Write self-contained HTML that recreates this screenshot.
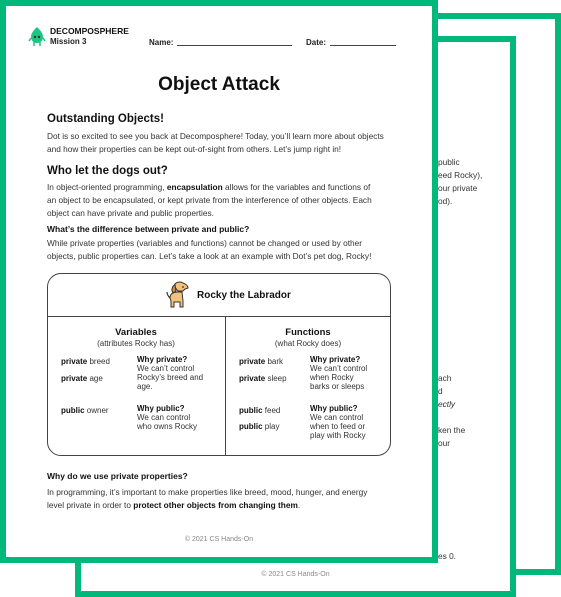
<!DOCTYPE html>
<html><head><meta charset="utf-8"><style>
*{margin:0;padding:0;box-sizing:border-box}
body{width:561px;height:597px;position:relative;overflow:hidden;background:#fff;font-family:"Liberation Sans",sans-serif;color:#222}
.pg{position:absolute;background:#fff;border:6px solid #00b87a}
.a{position:absolute;white-space:nowrap}
.t{font-size:8.3px;line-height:13px;color:#333}
b{color:#111}
</style></head><body>
<div class="pg" style="left:438px;top:13px;width:123px;height:562px;border-left:none"></div>
<div class="pg" style="left:75px;top:36px;width:441px;height:561px"></div>
<div class="a t" style="left:438px;top:156px">public</div>
<div class="a t" style="left:438px;top:169px">eed Rocky),</div>
<div class="a t" style="left:438px;top:182px">our private</div>
<div class="a t" style="left:438px;top:195px">od).</div>
<div class="a t" style="left:438px;top:372px">ach</div>
<div class="a t" style="left:438px;top:385px">d</div>
<div class="a t" style="left:438px;top:398px"><i>ectly</i></div>
<div class="a t" style="left:438px;top:424px">ken the</div>
<div class="a t" style="left:438px;top:437px">our</div>
<div class="a t" style="left:438px;top:550px">es 0.</div>
<div class="a" style="left:75px;width:441px;top:571px;text-align:center;font-size:7px;color:#888">© 2021 CS Hands-On</div>

<div class="pg" style="left:0;top:0;width:438px;height:563px"></div>
<svg class="a" style="left:28px;top:26px" width="18" height="22" viewBox="0 0 18 22"><path d="M9 1C6 4 3 7 3 11c0 4 3 6 6 6s6-2 6-6C15 7 12 4 9 1z" fill="#1ec47f"/><path d="M6 16v4M12 16v4M3 12l-2 3M15 12l2 3" stroke="#1ec47f" stroke-width="1.5"/><circle cx="7" cy="11" r="1.2" fill="#333"/><circle cx="11" cy="11" r="1.2" fill="#333"/></svg>
<div class="a" style="left:50px;top:26px;font-size:8.5px;font-weight:bold;color:#111">DECOMPOSPHERE</div>
<div class="a" style="left:50px;top:37px;font-size:8px;font-weight:bold;color:#222">Mission 3</div>
<div class="a" style="left:149px;top:38px;font-size:8px;font-weight:bold">Name:</div>
<div class="a" style="left:177px;top:45px;width:115px;border-top:1px solid #444"></div>
<div class="a" style="left:306px;top:38px;font-size:8px;font-weight:bold">Date:</div>
<div class="a" style="left:330px;top:45px;width:66px;border-top:1px solid #444"></div>
<div class="a" style="left:6px;width:426px;top:74px;text-align:center;font-size:19px;font-weight:bold;color:#111">Object Attack</div>

<div class="a" style="left:47px;top:113px;font-size:11.5px;font-weight:bold;color:#111">Outstanding Objects!</div>
<div class="a t" style="left:47px;top:130px">Dot is so excited to see you back at Decomposphere! Today, you’ll learn more about objects<br>and how their properties can be kept out-of-sight from others. Let’s jump right in!</div>
<div class="a" style="left:47px;top:165px;font-size:11.5px;font-weight:bold;color:#111">Who let the dogs out?</div>
<div class="a t" style="left:47px;top:181px">In object-oriented programming, <b>encapsulation</b> allows for the variables and functions of<br>an object to be encapsulated, or kept private from the interference of other objects. Each<br>object can have private and public properties.</div>
<div class="a" style="left:47px;top:224px;font-size:8.5px;font-weight:bold;color:#111">What’s the difference between private and public?</div>
<div class="a t" style="left:47px;top:237px">While private properties (variables and functions) cannot be changed or used by other<br>objects, public properties can. Let’s take a look at an example with Dot’s pet dog, Rocky!</div>

<div class="a" style="left:47px;top:273px;width:344px;height:183px;border:1px solid #444;border-radius:14px"></div>
<div class="a" style="left:47px;top:316px;width:344px;border-top:1px solid #444"></div>
<div class="a" style="left:225px;top:316px;height:140px;border-left:1px solid #444"></div>
<svg class="a" style="left:160px;top:278px" width="32" height="32" viewBox="0 0 32 32"><path d="M10 20c0-4 3-6 8-6h4l1 9v6h-3v-5h-6v5h-3v-6z" fill="#f1c27d" stroke="#333" stroke-width="1"/><path d="M14 8c1-4 6-5 9-3 3 1 5 3 5 5l-3 1-2 2h-5z" fill="#f1c27d" stroke="#333" stroke-width="1"/><path d="M15 7c-3 1-4 5-2 8l3-2z" fill="#c98b45" stroke="#333" stroke-width="1"/><path d="M10 20c-2-2-3-4-3-6" stroke="#333" stroke-width="1.2" fill="none"/><circle cx="23" cy="9" r="0.9" fill="#333"/></svg>
<div class="a" style="left:197px;top:290px;font-size:10px;font-weight:bold;color:#111">Rocky the Labrador</div>

<div class="a" style="left:47px;width:178px;top:327px;text-align:center;font-size:9.5px;font-weight:bold;color:#111">Variables</div>
<div class="a" style="left:47px;width:178px;top:339px;text-align:center;font-size:8px;color:#333">(attributes Rocky has)</div>
<div class="a" style="left:225px;width:166px;top:327px;text-align:center;font-size:9.5px;font-weight:bold;color:#111">Functions</div>
<div class="a" style="left:225px;width:166px;top:339px;text-align:center;font-size:8px;color:#333">(what Rocky does)</div>

<div class="a t" style="left:61px;top:355px;font-size:8px"><b>private</b> breed</div>
<div class="a t" style="left:61px;top:372px;font-size:8px"><b>private</b> age</div>
<div class="a t" style="left:61px;top:404px;font-size:8px"><b>public</b> owner</div>
<div class="a t" style="left:137px;top:355px;font-size:8px;line-height:9px"><b>Why private?</b><br>We can’t control<br>Rocky’s breed and<br>age.</div>
<div class="a t" style="left:137px;top:404px;font-size:8px;line-height:9px"><b>Why public?</b><br>We can control<br>who owns Rocky</div>

<div class="a t" style="left:239px;top:355px;font-size:8px"><b>private</b> bark</div>
<div class="a t" style="left:239px;top:372px;font-size:8px"><b>private</b> sleep</div>
<div class="a t" style="left:239px;top:404px;font-size:8px"><b>public</b> feed</div>
<div class="a t" style="left:239px;top:420px;font-size:8px"><b>public</b> play</div>
<div class="a t" style="left:310px;top:355px;font-size:8px;line-height:9px"><b>Why private?</b><br>We can’t control<br>when Rocky<br>barks or sleeps</div>
<div class="a t" style="left:310px;top:404px;font-size:8px;line-height:9px"><b>Why public?</b><br>We can control<br>when to feed or<br>play with Rocky</div>

<div class="a" style="left:47px;top:471px;font-size:8.5px;font-weight:bold;color:#111">Why do we use private properties?</div>
<div class="a t" style="left:47px;top:486px">In programming, it’s important to make properties like breed, mood, hunger, and energy<br>level private in order to <b>protect other objects from changing them</b>.</div>
<div class="a" style="left:6px;width:426px;top:536px;text-align:center;font-size:7px;color:#888">© 2021 CS Hands-On</div>
</body></html>
